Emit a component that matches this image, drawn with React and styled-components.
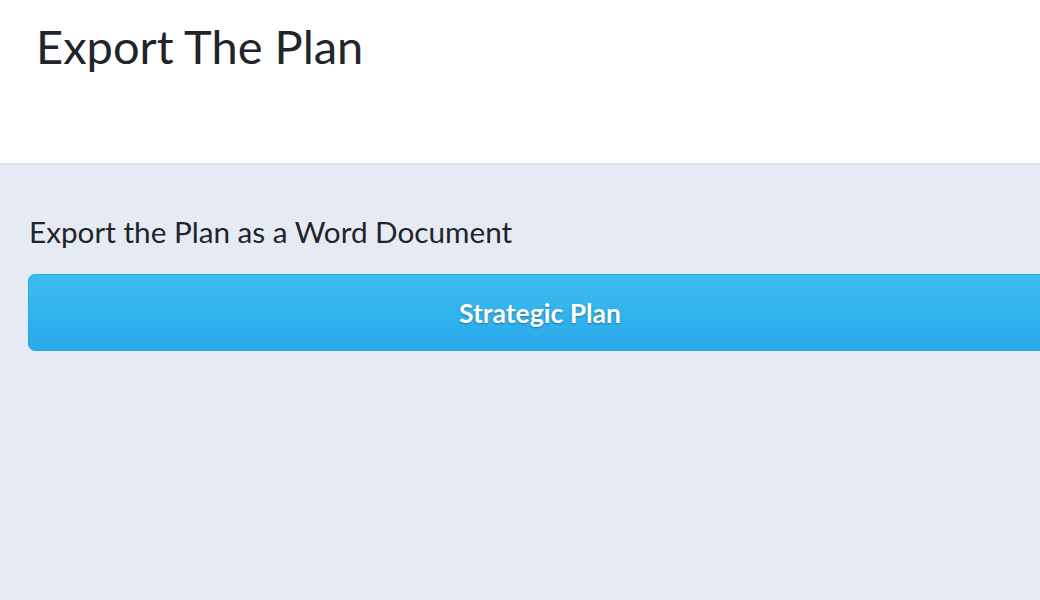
import React from 'react';
import styled, { createGlobalStyle } from 'styled-components';

const GlobalStyle = createGlobalStyle`
  html, body {
    margin: 0;
    padding: 0;
    background: #e6eaf2;
    font-family: Lato, "Open Sans", sans-serif;
    overflow: hidden;
  }
`;

const Page = styled.div`
  width: 1040px;
  height: 600px;
  background: #e6eaf2;
`;

const Header = styled.header`
  height: 165px;
  background: #ffffff;
  border-bottom: 2px solid #dee2e8;
  box-sizing: border-box;
  padding: 17px 36px 0;
`;

const Title = styled.h1`
  margin: 0;
  font-size: 47px;
  font-weight: 400;
  line-height: 58px;
  color: #212529;
`;

const Body = styled.main`
  padding: 47px 0 0 28px;
`;

const Label = styled.h2`
  margin: 0 0 22px 1px;
  font-size: 29.7px;
  font-weight: 400;
  line-height: 40px;
  color: #212529;
`;

const ExportButton = styled.button`
  display: block;
  width: 1024px;
  height: 77px;
  border: 1px solid #27a6e4;
  border-radius: 7px;
  background: linear-gradient(to bottom, #3dbcf0 0%, #29aae9 100%);
  color: #ffffff;
  font-family: inherit;
  font-size: 26.5px;
  font-weight: 700;
  text-shadow: 0 1px 2px rgba(0, 0, 0, 0.35);
  cursor: pointer;
`;

export default function App() {
  return (
    <Page>
      <GlobalStyle />
      <Header>
        <Title>Export The Plan</Title>
      </Header>
      <Body>
        <Label>Export the Plan as a Word Document</Label>
        <ExportButton>Strategic Plan</ExportButton>
      </Body>
    </Page>
  );
}
